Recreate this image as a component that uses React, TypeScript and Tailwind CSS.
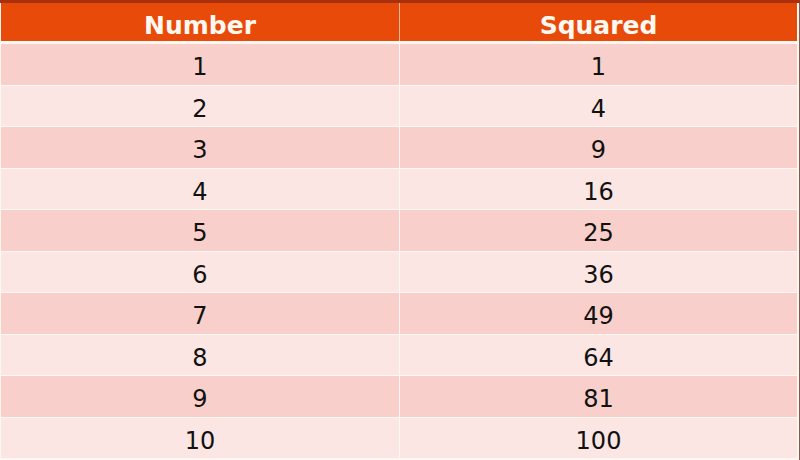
const rows = [1, 2, 3, 4, 5, 6, 7, 8, 9, 10];

export default function App() {
  return (
    <div
      className="w-[800px] h-[460px] flex flex-col bg-[#fff7f2] pl-px pr-[2px] pb-[2px] border-r border-[#8a5a48]"
      style={{ fontFamily: '"DejaVu Sans", Verdana, sans-serif' }}
    >
      {/* top rule */}
      <div className="h-[3px] -ml-px -mr-[3px] bg-[#a8300e]" />

      {/* header */}
      <div className="h-[38px] grid grid-cols-[398px_1fr] gap-px bg-[#f3b89a]">
        <div className="bg-[#e84a0a] flex items-center justify-center pt-[6px] text-[25px] leading-none font-bold text-[#fff8f0]">
          Number
        </div>
        <div className="bg-[#e84a0a] flex items-center justify-center pt-[6px] text-[25px] leading-none font-bold text-[#fff8f0]">
          Squared
        </div>
      </div>

      {/* body */}
      <div className="flex-1 min-h-0 flex flex-col gap-px mt-[3px]">
        {rows.map((n, i) => (
          <div key={n} className="flex-1 min-h-0 grid grid-cols-[398px_1fr] gap-px">
            <div
              className={`flex items-center justify-center pt-[6px] text-[24px] leading-none text-[#111] ${
                i % 2 === 0 ? "bg-[#f8cfca]" : "bg-[#fbe6e3]"
              }`}
            >
              {n}
            </div>
            <div
              className={`flex items-center justify-center pt-[6px] text-[24px] leading-none text-[#111] ${
                i % 2 === 0 ? "bg-[#f8cfca]" : "bg-[#fbe6e3]"
              }`}
            >
              {n * n}
            </div>
          </div>
        ))}
      </div>
    </div>
  );
}
